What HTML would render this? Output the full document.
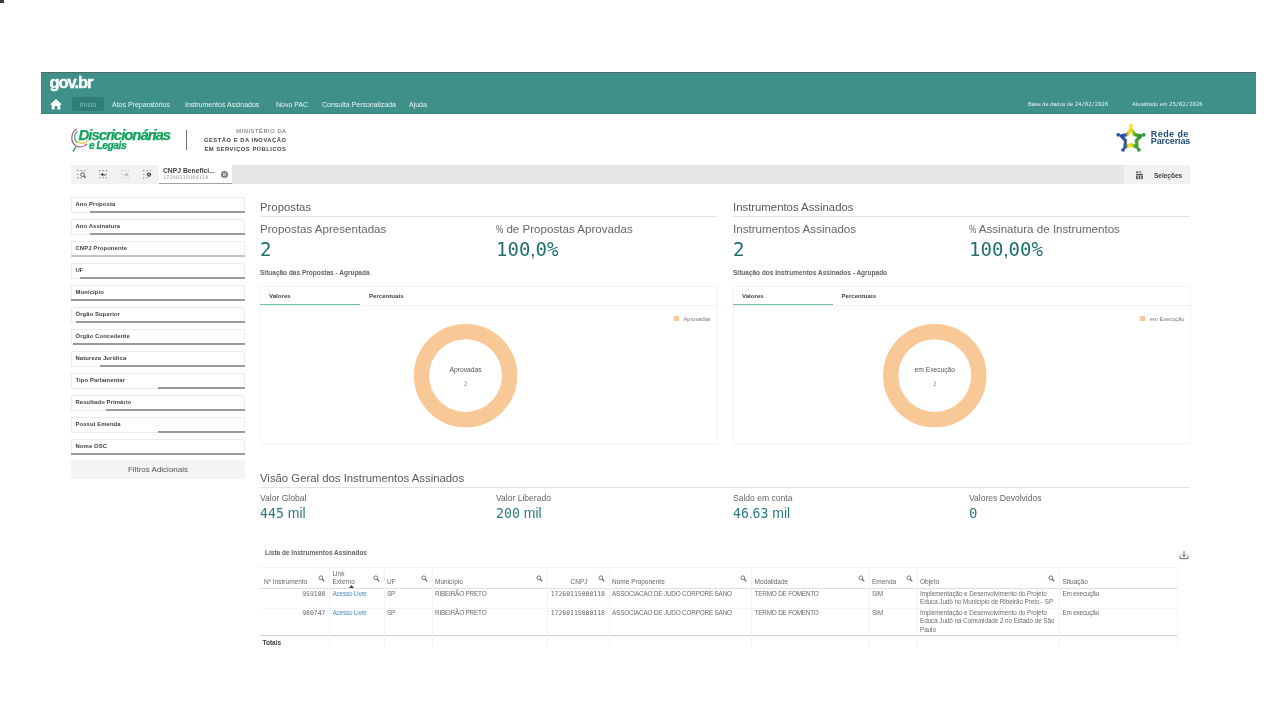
<!DOCTYPE html>
<html lang="pt-BR">
<head>
<meta charset="utf-8">
<title>Discricionárias e Legais</title>
<style>
*{box-sizing:border-box;margin:0;padding:0}
html,body{width:1280px;height:720px;overflow:hidden;background:#fff}
body{position:relative;will-change:transform;font-family:"Liberation Sans",sans-serif;color:#595959;-webkit-font-smoothing:antialiased}
.abs{position:absolute;white-space:nowrap}
.m{font-family:"DejaVu Sans Mono","Liberation Mono",monospace}
/* header */
#corner{left:0;top:0;width:4px;height:3px;background:#3a3a3a}
#hdr{left:41px;top:72px;width:1215px;height:42px;background:#40908a;border-top:1px solid #4b6b68;border-bottom:1px solid #38877f}
#govbr{left:49.5px;top:72.8px;-webkit-text-stroke:.35px #fff;font-size:16.6px;font-weight:bold;color:#fff;letter-spacing:-1.1px;line-height:20px}
.nav{top:98px;font-size:7px;color:#e6f3f1;line-height:13px}
#inicio{left:72px;top:97px;width:32px;height:14px;padding-top:.6px;background:#2f7d77;border-radius:1px;color:#7fc2bb;font-size:6.9px;line-height:14px;text-align:center}
.hd{top:99px;font-size:5.6px;color:#e6f3f1;line-height:10px}
/* logo row */
#sep{left:186px;top:130px;width:1px;height:20px;background:#777}
.min{right:993.5px;font-size:5.8px;letter-spacing:0.52px;color:#666;line-height:8px;text-align:right}
.minb{font-weight:bold;color:#444}
/* selection bar */
#selbar{left:71px;top:165px;width:1119px;height:18.6px;background:#e6e6e6}
#seltools{left:71px;top:165px;width:88px;height:18.6px;background:#f2f2f2}
#selchip{left:158.7px;top:165px;width:73.6px;height:18.6px;background:#fff;border-bottom:1.3px solid #a3a3a3}
#selbtn{left:1124px;top:165px;width:66px;height:18.6px;background:#f2f2f2}
/* sidebar */
.fp{left:71px;width:174px;height:15.5px;background:#fff;border:1px solid #ececec;border-radius:1px}
.fp span{position:absolute;left:3.5px;top:1.8px;font-size:5.9px;font-weight:bold;color:#404040;line-height:8px;letter-spacing:.1px}
.fb{height:1.6px;background:#999}
#fadd{left:71px;top:460px;width:174px;height:19px;background:#f4f4f4;font-size:8px;color:#555;text-align:center;line-height:19px}
/* main */
.h1{font-size:11.35px;color:#595959;line-height:16px}
.hr{height:1px;background:#e3e3e3}
.kt{font-size:11.6px;color:#666;line-height:16px}
.kv{font-size:19px;color:#1f6e70;line-height:22px}
.kt2{font-size:8.55px;color:#666;line-height:12px}
.kv2{font-size:14px;color:#2b7a7c;line-height:18px}
.kv2 .m{font-size:13.2px}
.pc{display:inline-block;transform:scaleX(.7);transform-origin:0 50%;width:7.2px}
.ls{font-family:"Liberation Sans",sans-serif}
.ct{font-size:6.5px;font-weight:bold;color:#636363;line-height:8px}
.box{border:1px solid #f4f4f4;background:#fff}
.tab{font-size:6.1px;font-weight:bold;color:#404040;line-height:8px}
.tabu{height:1px;background:#6cc5a3}
.tabl{height:1px;background:#f1f1f1}
.lg{font-size:5.7px;color:#777;line-height:8px}
.lgs{width:5px;height:5px;background:#f8c795}
.dl{font-size:6.7px;color:#555;line-height:9px;text-align:center}
.dv{font-size:6px;color:#8a8a8a;line-height:7px;text-align:center}
/* table */
.th{font-size:6.5px;color:#666;line-height:8px}
.td{font-size:6.4px;color:#6a6a6a;line-height:8px;letter-spacing:-.2px}
.tn{font-size:6.44px;color:#6a6a6a;letter-spacing:0}
.lnk{color:#4a90c2}
.vs{width:1px;background:#f2f2f2;top:567px;height:81px}
</style>
</head>
<body>
<div class="abs" id="corner"></div>

<!-- header -->
<div class="abs" id="hdr"></div>
<div class="abs" id="govbr">gov.br</div>
<svg class="abs" style="left:49px;top:98px" width="14" height="13" viewBox="0 0 14 13"><path d="M7 1 L13 6.6 H11.3 V11.6 H8.3 V8 H5.7 V11.6 H2.7 V6.6 H1 Z" fill="#fff"/></svg>
<div class="abs" id="inicio">Início</div>
<div class="abs nav" style="left:112px">Atos Preparatórios</div>
<div class="abs nav" style="left:185px">Instrumentos Assinados</div>
<div class="abs nav" style="left:276px">Novo PAC</div>
<div class="abs nav" style="left:322px">Consulta Personalizada</div>
<div class="abs nav" style="left:409px">Ajuda</div>
<div class="abs hd" style="left:1028px">Base de dados de <span class="m">24/02/2026</span></div>
<div class="abs hd" style="left:1132px">Atualizado em <span class="m">25/02/2026</span></div>

<!-- logo row -->
<svg class="abs" style="left:66px;top:122px" width="110" height="36" viewBox="0 0 110 36">
  <path d="M10.6 7 C4.5 11 4 20.5 10.5 24.3 C14 25.6 18.5 24.6 21 21.8" fill="none" stroke="#a8457f" stroke-width="1.1"/>
  <path d="M11.6 9.2 C7.6 12 7.6 18 11.4 20.8" fill="none" stroke="#3cb371" stroke-width="1.2"/>
  <path d="M11.8 19.6 C15 22.6 19.6 21.6 21.8 18.2" fill="none" stroke="#e9d35a" stroke-width="1.5"/>
  <path d="M9.8 24.6 L7 29.6" fill="none" stroke="#2fae6b" stroke-width="1.6"/>
  <text x="12.6" y="17.5" font-family="Liberation Sans, sans-serif" font-size="15" font-weight="bold" font-style="italic" fill="#12a35c" stroke="#12a35c" stroke-width=".25" letter-spacing="-1.07">Discricionárias</text>
  <text x="23" y="26.6" font-family="Liberation Sans, sans-serif" font-size="10.2" font-weight="bold" font-style="italic" fill="#12a35c" stroke="#12a35c" stroke-width=".3" letter-spacing="-0.45">e Legais</text>
</svg>
<div class="abs" id="sep"></div>
<div class="abs min" style="top:127px">MINISTÉRIO DA</div>
<div class="abs min minb" style="top:136px">GESTÃO E DA INOVAÇÃO</div>
<div class="abs min minb" style="top:145.3px">EM SERVIÇOS PÚBLICOS</div>

<svg class="abs" style="left:1114.9px;top:123.1px" width="32" height="32" viewBox="0 0 32 32">
  <defs><linearGradient id="rg" x1="0" y1="0" x2="1" y2="0"><stop offset="0" stop-color="#2747a6"/><stop offset=".22" stop-color="#3557aa"/><stop offset=".36" stop-color="#e4dc2a"/><stop offset=".55" stop-color="#e9e020"/><stop offset=".68" stop-color="#58ad2c"/><stop offset="1" stop-color="#238c3a"/></linearGradient></defs>
  <path d="M16.00 5.80 L19.29 11.47 L25.70 12.85 L21.33 17.73 L22.00 24.25 L16.00 21.60 L10.00 24.25 L10.67 17.73 L6.30 12.85 L12.71 11.47 Z" fill="none" stroke="url(#rg)" stroke-width="3.4" stroke-linejoin="round"/>
  <circle cx="16.00" cy="2.60" r="1.9" fill="#f3e21a"/><circle cx="28.74" cy="11.86" r="1.9" fill="#2f9a3c"/><circle cx="23.88" cy="26.84" r="1.9" fill="#2f9a3c"/><circle cx="8.12" cy="26.84" r="1.9" fill="#2d4fae"/><circle cx="3.26" cy="11.86" r="1.9" fill="#2d4fae"/>
</svg>
<div class="abs" style="left:1150.8px;top:128.6px;font-size:9px;font-weight:bold;color:#1f4b7d;line-height:10px;letter-spacing:.42px">Rede de</div>
<div class="abs" style="left:1150.8px;top:135.9px;font-size:9px;font-weight:bold;color:#1f4b7d;line-height:10px;letter-spacing:-.12px">Parcerias</div>

<!-- selection bar -->
<div class="abs" id="selbar"></div>
<div class="abs" id="seltools"></div>
<div class="abs" id="selchip"></div>
<div class="abs" id="selbtn"></div>
<div class="abs" style="left:163px;top:166.5px;font-size:6.75px;font-weight:bold;color:#404040;line-height:8px">CNPJ Benefici...</div>
<div class="abs m" style="left:163px;top:174px;font-size:5.2px;color:#999;line-height:6px;letter-spacing:.13px">17260115000118</div>
<svg class="abs" style="left:220px;top:170px" width="9" height="9" viewBox="0 0 9 9"><circle cx="4.5" cy="4.5" r="3.6" fill="#808080"/><path d="M3.1 3.1 L5.9 5.9 M5.9 3.1 L3.1 5.9" stroke="#fff" stroke-width="1"/></svg>
<div class="abs" style="left:1154px;top:170.8px;font-size:6.5px;font-weight:bold;color:#404040;line-height:9px">Seleções</div>
<svg class="abs" style="left:1135px;top:171px" width="9" height="9" viewBox="0 0 9 9" fill="#595959"><rect x="1" y="0.5" width="2" height="1.6"/><rect x="4" y="0.5" width="2" height="1.6" fill="none" stroke="#595959" stroke-width=".5"/><rect x="1" y="3" width="7" height="1.5"/><rect x="1" y="5" width="1.7" height="3.2"/><rect x="3.6" y="5" width="1.7" height="3.2"/><rect x="6.2" y="5" width="1.7" height="3.2"/></svg>
<svg class="abs" style="left:77px;top:170.2px" width="10" height="10" viewBox="0 0 10 10"><rect x="0.0" y="0.09999999999999998" width="1.3" height="1" fill="#7a7a7a"/><rect x="3.4" y="0.09999999999999998" width="1.3" height="1" fill="#7a7a7a"/><rect x="6.800000000000001" y="0.09999999999999998" width="1.3" height="1" fill="#7a7a7a"/><rect x="0.0" y="3.7" width="1.3" height="1" fill="#7a7a7a"/><rect x="0.0" y="7.3" width="1.3" height="1" fill="#7a7a7a"/><rect x="3.4" y="7.3" width="1.3" height="1" fill="#7a7a7a"/><circle cx="5.6" cy="4.6" r="1.9" fill="none" stroke="#555" stroke-width=".9"/><path d="M7 6 L8.8 7.9" stroke="#555" stroke-width="1.1"/></svg>
<svg class="abs" style="left:99.4px;top:170.2px" width="10" height="10" viewBox="0 0 10 10"><rect x="0.0" y="0.09999999999999998" width="1.3" height="1" fill="#7a7a7a"/><rect x="3.4" y="0.09999999999999998" width="1.3" height="1" fill="#7a7a7a"/><rect x="6.800000000000001" y="0.09999999999999998" width="1.3" height="1" fill="#7a7a7a"/><rect x="0.0" y="3.7" width="1.3" height="1" fill="#7a7a7a"/><rect x="0.0" y="7.3" width="1.3" height="1" fill="#7a7a7a"/><rect x="3.4" y="7.3" width="1.3" height="1" fill="#7a7a7a"/><rect x="6.8" y="3.7" width="1.3" height="1" fill="#7a7a7a"/><rect x="6.8" y="7.3" width="1.3" height="1" fill="#7a7a7a"/><path d="M1.6 4.6 L4 2.8 V3.9 C6 3.9 6.6 5 6.6 6.2 C5.8 5.3 5 5.2 4 5.3 V6.4 Z" fill="#444"/></svg>
<svg class="abs" style="left:121.4px;top:170.2px" width="10" height="10" viewBox="0 0 10 10"><rect x="0.0" y="0.09999999999999998" width="1.3" height="1" fill="#c4c4c4"/><rect x="3.4" y="0.09999999999999998" width="1.3" height="1" fill="#c4c4c4"/><rect x="6.800000000000001" y="0.09999999999999998" width="1.3" height="1" fill="#c4c4c4"/><rect x="0.0" y="3.7" width="1.3" height="1" fill="#c4c4c4"/><rect x="0.0" y="7.3" width="1.3" height="1" fill="#c4c4c4"/><rect x="3.4" y="7.3" width="1.3" height="1" fill="#c4c4c4"/><rect x="6.8" y="7.3" width="1.3" height="1" fill="#c4c4c4"/><path d="M7.6 4.6 L5.2 2.8 V3.9 C3.2 3.9 2.6 5 2.6 6.2 C3.4 5.3 4.2 5.2 5.2 5.3 V6.4 Z" fill="#b5b5b5"/></svg>
<svg class="abs" style="left:143.2px;top:170.2px" width="10" height="10" viewBox="0 0 10 10"><rect x="0.0" y="0.09999999999999998" width="1.3" height="1" fill="#7a7a7a"/><rect x="3.4" y="0.09999999999999998" width="1.3" height="1" fill="#7a7a7a"/><rect x="6.800000000000001" y="0.09999999999999998" width="1.3" height="1" fill="#7a7a7a"/><rect x="0.0" y="3.7" width="1.3" height="1" fill="#7a7a7a"/><rect x="0.0" y="7.3" width="1.3" height="1" fill="#7a7a7a"/><rect x="3.4" y="7.3" width="1.3" height="1" fill="#7a7a7a"/><circle cx="6" cy="4.6" r="2.2" fill="#444"/><path d="M5.1 3.7 L6.9 5.5 M6.9 3.7 L5.1 5.5" stroke="#f2f2f2" stroke-width=".7"/></svg>

<!-- sidebar -->
<div class="abs fp" style="top:197px"><span>Ano Proposta</span></div>
<div class="abs fb" style="top:211px;left:89.5px;width:155.0px"></div>
<div class="abs fp" style="top:219px"><span>Ano Assinatura</span></div>
<div class="abs fb" style="top:233px;left:89.5px;width:155.0px"></div>
<div class="abs fp" style="top:241px"><span>CNPJ Proponente</span></div>
<div class="abs fb" style="top:255px;left:71px;width:173.5px;background:#c4c4c4"></div>
<div class="abs fp" style="top:263px"><span>UF</span></div>
<div class="abs fb" style="top:277px;left:79.5px;width:165.0px"></div>
<div class="abs fp" style="top:285px"><span>Município</span></div>
<div class="abs fb" style="top:299px;left:71px;width:173.5px"></div>
<div class="abs fp" style="top:307px"><span>Órgão Superior</span></div>
<div class="abs fb" style="top:321px;left:75.5px;width:169.0px"></div>
<div class="abs fp" style="top:329px"><span>Órgão Concedente</span></div>
<div class="abs fb" style="top:343px;left:72.5px;width:172.0px"></div>
<div class="abs fp" style="top:351px"><span>Natureza Jurídica</span></div>
<div class="abs fb" style="top:365px;left:100px;width:144.5px"></div>
<div class="abs fp" style="top:373px"><span>Tipo Parlamentar</span></div>
<div class="abs fb" style="top:387px;left:157.5px;width:87.0px"></div>
<div class="abs fp" style="top:395px"><span>Resultado Primário</span></div>
<div class="abs fb" style="top:409px;left:105.75px;width:138.75px"></div>
<div class="abs fp" style="top:417px"><span>Possui Emenda</span></div>
<div class="abs fb" style="top:431px;left:157.5px;width:87.0px"></div>
<div class="abs fp" style="top:439px"><span>Nome OSC</span></div>
<div class="abs fb" style="top:453px;left:71px;width:173.5px"></div>
<div class="abs" id="fadd">Filtros Adicionais</div>


<!-- main placeholder -->
<!-- Propostas -->
<div class="abs h1" style="left:260px;top:198.5px">Propostas</div>
<div class="abs hr" style="left:260px;top:216px;width:457px"></div>
<div class="abs kt" style="left:260px;top:220.5px">Propostas Apresentadas</div>
<div class="abs kt" style="left:496px;top:220.5px"><span class="pc">%</span> de Propostas Aprovadas</div>
<div class="abs kv m" style="left:260px;top:237.5px">2</div>
<div class="abs kv m" style="left:496px;top:237.5px">100<span class="ls">,</span>0%</div>
<div class="abs ct" style="left:260px;top:268.5px">Situação das Propostas - Agrupada</div>
<div class="abs box" style="left:260px;top:285.9px;width:458px;height:157.7px"></div>
<div class="abs tabl" style="left:260px;top:304.5px;width:458px"></div>
<div class="abs tabu" style="left:260px;top:304px;width:100px"></div>
<div class="abs tab" style="left:269px;top:292px">Valores</div>
<div class="abs tab" style="left:369px;top:292px">Percentuais</div>
<div class="abs lgs" style="left:673.5px;top:316px"></div>
<div class="abs lg" style="left:683.5px;top:314.5px">Aprovadas</div>
<svg class="abs" style="left:410px;top:320px" width="112" height="112" viewBox="0 0 112 112"><circle cx="55.6" cy="55.6" r="44.05" fill="none" stroke="#f8c896" stroke-width="15.3"/></svg>
<div class="abs dl" style="left:435.6px;top:364.8px;width:60px">Aprovadas</div>
<div class="abs dv m" style="left:435.6px;top:380px;width:60px">2</div>

<!-- Instrumentos Assinados -->
<div class="abs h1" style="left:733px;top:198.5px">Instrumentos Assinados</div>
<div class="abs hr" style="left:733px;top:216px;width:457px"></div>
<div class="abs kt" style="left:733px;top:220.5px">Instrumentos Assinados</div>
<div class="abs kt" style="left:969px;top:220.5px"><span class="pc">%</span> Assinatura de Instrumentos</div>
<div class="abs kv m" style="left:733px;top:237.5px">2</div>
<div class="abs kv m" style="left:969px;top:237.5px">100<span class="ls">,</span>00%</div>
<div class="abs ct" style="left:733px;top:268.5px">Situação dos Instrumentos Assinados - Agrupado</div>
<div class="abs box" style="left:733px;top:285.9px;width:458px;height:157.7px"></div>
<div class="abs tabl" style="left:733px;top:304.5px;width:458px"></div>
<div class="abs tabu" style="left:733px;top:304px;width:100px"></div>
<div class="abs tab" style="left:742px;top:292px">Valores</div>
<div class="abs tab" style="left:841.5px;top:292px">Percentuais</div>
<div class="abs lgs" style="left:1140px;top:316px"></div>
<div class="abs lg" style="left:1150px;top:314.5px">em Execução</div>
<svg class="abs" style="left:879px;top:320px" width="112" height="112" viewBox="0 0 112 112"><circle cx="55.8" cy="55.6" r="44.05" fill="none" stroke="#f8c896" stroke-width="15.3"/></svg>
<div class="abs dl" style="left:904.8px;top:364.8px;width:60px">em Execução</div>
<div class="abs dv m" style="left:904.8px;top:380px;width:60px">2</div>

<!-- Visão Geral -->
<div class="abs h1" style="left:260px;top:469.5px">Visão Geral dos Instrumentos Assinados</div>
<div class="abs hr" style="left:260px;top:487px;width:930px"></div>
<div class="abs kt2" style="left:260px;top:491.5px">Valor Global</div>
<div class="abs kt2" style="left:496px;top:491.5px">Valor Liberado</div>
<div class="abs kt2" style="left:733px;top:491.5px">Saldo em conta</div>
<div class="abs kt2" style="left:969px;top:491.5px">Valores Devolvidos</div>
<div class="abs kv2" style="left:260px;top:503.5px"><span class="m">445</span> mil</div>
<div class="abs kv2" style="left:496px;top:503.5px"><span class="m">200</span> mil</div>
<div class="abs kv2" style="left:733px;top:503.5px"><span class="m">46<span class="ls">.</span>63</span> mil</div>
<div class="abs kv2 m" style="left:969px;top:503.5px">0</div>

<!-- table -->
<div class="abs ct" style="left:265px;top:549px">Lista de Instrumentos Assinados</div>
<svg class="abs" style="left:1179px;top:550px" width="10" height="10" viewBox="0 0 10 10" fill="none" stroke="#595959" stroke-width="0.9"><path d="M5 1 V6.4 M2.8 4.4 L5 6.6 L7.2 4.4"/><path d="M1 5.6 V8.6 H9 V5.6"/></svg>
<div class="abs" style="left:260px;top:567px;width:918px;height:1px;background:#f4f4f4"></div>
<div class="abs" style="left:260px;top:588px;width:918px;height:1px;background:#dedede"></div>
<div class="abs" style="left:260px;top:607.5px;width:918px;height:1px;background:#f6f6f6"></div>
<div class="abs" style="left:260px;top:634.6px;width:918px;height:1.5px;background:#d2d2d2"></div>
<div class="abs vs" style="left:329.0px"></div>
<div class="abs vs" style="left:384.0px"></div>
<div class="abs vs" style="left:432.0px"></div>
<div class="abs vs" style="left:547.0px"></div>
<div class="abs vs" style="left:608.5px"></div>
<div class="abs vs" style="left:750.5px"></div>
<div class="abs vs" style="left:868.5px"></div>
<div class="abs vs" style="left:917.0px"></div>
<div class="abs vs" style="left:1058.5px"></div>
<div class="abs vs" style="left:1177.0px"></div>
<div class="abs th" style="left:264px;top:578px">Nº Instrumento</div>
<svg class="abs" style="left:318px;top:575px" width="7" height="7" viewBox="0 0 7 7" fill="none" stroke="#595959" stroke-width="0.8"><circle cx="2.8" cy="2.8" r="1.9"/><path d="M4.2 4.2 L6.3 6.3" stroke-width="1.1"/></svg>
<div class="abs th" style="left:332.5px;top:570px;line-height:8px">Link<br>Externo</div>
<svg class="abs" style="left:372.5px;top:575px" width="7" height="7" viewBox="0 0 7 7" fill="none" stroke="#595959" stroke-width="0.8"><circle cx="2.8" cy="2.8" r="1.9"/><path d="M4.2 4.2 L6.3 6.3" stroke-width="1.1"/></svg>
<svg class="abs" style="left:348.5px;top:584.6px" width="5" height="3" viewBox="0 0 5 3"><path d="M0 3 L2.5 0 L5 3 Z" fill="#404040"/></svg>
<div class="abs th" style="left:387px;top:578px">UF</div>
<svg class="abs" style="left:420.5px;top:575px" width="7" height="7" viewBox="0 0 7 7" fill="none" stroke="#595959" stroke-width="0.8"><circle cx="2.8" cy="2.8" r="1.9"/><path d="M4.2 4.2 L6.3 6.3" stroke-width="1.1"/></svg>
<div class="abs th" style="left:435px;top:578px">Município</div>
<svg class="abs" style="left:535.5px;top:575px" width="7" height="7" viewBox="0 0 7 7" fill="none" stroke="#595959" stroke-width="0.8"><circle cx="2.8" cy="2.8" r="1.9"/><path d="M4.2 4.2 L6.3 6.3" stroke-width="1.1"/></svg>
<div class="abs th" style="left:560px;width:27.5px;text-align:right;top:578px">CNPJ</div>
<svg class="abs" style="left:597.5px;top:575px" width="7" height="7" viewBox="0 0 7 7" fill="none" stroke="#595959" stroke-width="0.8"><circle cx="2.8" cy="2.8" r="1.9"/><path d="M4.2 4.2 L6.3 6.3" stroke-width="1.1"/></svg>
<div class="abs th" style="left:612px;top:578px">Nome Proponente</div>
<svg class="abs" style="left:740px;top:575px" width="7" height="7" viewBox="0 0 7 7" fill="none" stroke="#595959" stroke-width="0.8"><circle cx="2.8" cy="2.8" r="1.9"/><path d="M4.2 4.2 L6.3 6.3" stroke-width="1.1"/></svg>
<div class="abs th" style="left:754.5px;top:578px">Modalidade</div>
<svg class="abs" style="left:857.5px;top:575px" width="7" height="7" viewBox="0 0 7 7" fill="none" stroke="#595959" stroke-width="0.8"><circle cx="2.8" cy="2.8" r="1.9"/><path d="M4.2 4.2 L6.3 6.3" stroke-width="1.1"/></svg>
<div class="abs th" style="left:872px;top:578px">Emenda</div>
<svg class="abs" style="left:905.5px;top:575px" width="7" height="7" viewBox="0 0 7 7" fill="none" stroke="#595959" stroke-width="0.8"><circle cx="2.8" cy="2.8" r="1.9"/><path d="M4.2 4.2 L6.3 6.3" stroke-width="1.1"/></svg>
<div class="abs th" style="left:920px;top:578px">Objeto</div>
<svg class="abs" style="left:1047.5px;top:575px" width="7" height="7" viewBox="0 0 7 7" fill="none" stroke="#595959" stroke-width="0.8"><circle cx="2.8" cy="2.8" r="1.9"/><path d="M4.2 4.2 L6.3 6.3" stroke-width="1.1"/></svg>
<div class="abs th" style="left:1062.5px;top:578px">Situação</div>
<div class="abs td m tn" style="left:270px;width:55.5px;text-align:right;top:589.8px">959188</div>
<div class="abs td lnk" style="left:332.5px;top:589.8px">Acesso Livre</div>
<div class="abs td" style="left:387px;top:589.8px">SP</div>
<div class="abs td" style="left:435px;top:589.8px">RIBEIRÃO PRETO</div>
<div class="abs td m tn" style="left:540px;width:65px;text-align:right;top:589.8px">17260115000118</div>
<div class="abs td" style="left:612px;top:589.8px">ASSOCIACAO DE JUDO CORPORE SANO</div>
<div class="abs td" style="left:754.5px;top:589.8px">TERMO DE FOMENTO</div>
<div class="abs td" style="left:872px;top:589.8px">SIM</div>
<div class="abs td" style="left:920px;top:589.8px;line-height:8.1px;letter-spacing:-.05px;font-size:6.3px">Implementação e Desenvolvimento do Projeto<br>Educa Judô no Município de Ribeirão Preto - SP</div>
<div class="abs td" style="left:1062.5px;top:589.8px">Em execução</div>
<div class="abs td m tn" style="left:270px;width:55.5px;text-align:right;top:609.4px">980747</div>
<div class="abs td lnk" style="left:332.5px;top:609.4px">Acesso Livre</div>
<div class="abs td" style="left:387px;top:609.4px">SP</div>
<div class="abs td" style="left:435px;top:609.4px">RIBEIRÃO PRETO</div>
<div class="abs td m tn" style="left:540px;width:65px;text-align:right;top:609.4px">17260115000118</div>
<div class="abs td" style="left:612px;top:609.4px">ASSOCIACAO DE JUDO CORPORE SANO</div>
<div class="abs td" style="left:754.5px;top:609.4px">TERMO DE FOMENTO</div>
<div class="abs td" style="left:872px;top:609.4px">SIM</div>
<div class="abs td" style="left:920px;top:609.4px;line-height:8.1px;letter-spacing:-.05px;font-size:6.3px">Implementação e Desenvolvimento do Projeto<br>Educa Judô na Comunidade 2 no Estado de São<br>Paulo</div>
<div class="abs td" style="left:1062.5px;top:609.4px">Em execução</div>
<div class="abs ct" style="left:262.5px;top:639px;color:#404040">Totais</div>

</body>
</html>
